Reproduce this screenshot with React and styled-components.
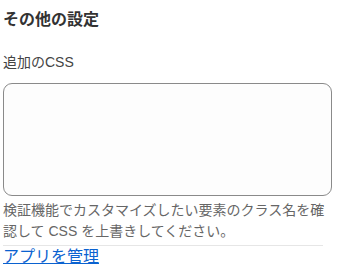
import React from "react";
import styled, { createGlobalStyle } from "styled-components";

const Global = createGlobalStyle`
  html, body { margin: 0; padding: 0; background: #fff; }
  body { font-family: "Liberation Sans", "Noto Sans CJK JP", sans-serif; }
`;

const Panel = styled.div`
  width: 329px;
  padding: 0 3px;
  display: flex;
  flex-direction: column;
`;

const Heading = styled.h3`
  margin: 9px 0 0;
  font-size: 16px;
  line-height: 22px;
  font-weight: 700;
  color: #333;
`;

const Label = styled.label`
  margin-top: 21px;
  font-size: 14px;
  line-height: 20px;
  color: #444;
`;

const Area = styled.textarea`
  margin-top: 11px;
  box-sizing: border-box;
  width: 329px;
  height: 113px;
  border: 1px solid #8a8a8a;
  border-radius: 9px;
  background: #fdfdfd;
  resize: none;
  padding: 6px 8px;
  font-family: inherit;
  font-size: 14px;
  outline: none;
`;

const Help = styled.p`
  margin: 4px 0 0;
  font-size: 14px;
  line-height: 21px;
  color: #666;
`;

const Divider = styled.hr`
  margin: 3px 0 0;
  width: 320px;
  border: 0;
  border-top: 1px solid #e6e6e6;
`;

const Link = styled.a`
  font-size: 16px;
  line-height: 21px;
  color: #0a62d0;
  text-decoration: underline;
  align-self: flex-start;
`;

export default function App() {
  return (
    <>
      <Global />
      <Panel>
        <Heading>その他の設定</Heading>
        <Label>追加のCSS</Label>
        <Area />
        <Help>検証機能でカスタマイズしたい要素のクラス名を確認して CSS を上書きしてください。</Help>
        <Divider />
        <Link href="#">アプリを管理</Link>
      </Panel>
    </>
  );
}
